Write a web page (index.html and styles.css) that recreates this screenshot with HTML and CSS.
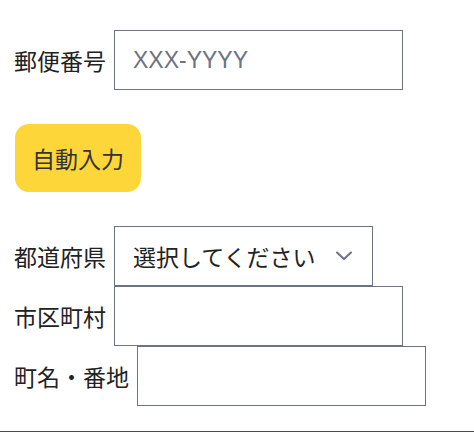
FILE: index.html
```html
<!DOCTYPE html>
<html lang="ja">
<head>
<meta charset="utf-8">
<title>住所入力</title>
<link rel="stylesheet" href="styles.css">
</head>
<body>
<main class="form">
  <div class="row">
    <label class="label" for="zip">郵便番号</label>
    <input class="field" id="zip" type="text" placeholder="XXX-YYYY">
  </div>
  <button class="autofill" type="button">自動入力</button>
  <div class="address">
    <div class="row">
      <label class="label" for="pref">都道府県</label>
      <span class="select-wrap">
        <select class="select" id="pref">
          <option>選択してください</option>
        </select>
        <svg class="chevron" width="18" height="10" viewBox="0 0 18 10" aria-hidden="true">
          <path d="M2 1.5 L9 8 L16 1.5" fill="none" stroke="#6b7280" stroke-width="2" stroke-linecap="round" stroke-linejoin="round"/>
        </svg>
      </span>
    </div>
    <div class="row">
      <label class="label" for="city">市区町村</label>
      <input class="field" id="city" type="text">
    </div>
    <div class="row">
      <label class="label" for="street">町名・番地</label>
      <input class="field" id="street" type="text">
    </div>
  </div>
  <div class="rule"></div>
</main>
</body>
</html>
```
FILE: styles.css
```css
html, body {
  margin: 0;
  padding: 0;
  background: #ffffff;
}
body {
  font-family: "Liberation Sans", "Noto Sans CJK JP", sans-serif;
  color: #222222;
  font-size: 23px;
}
.form {
  display: flex;
  flex-direction: column;
  align-items: flex-start;
  padding-top: 30px;
}
.row {
  display: flex;
  align-items: center;
  gap: 8px;
  padding-left: 14px;
}
.label {
  font-family: "Noto Sans CJK JP", sans-serif;
  font-size: 23px;
  line-height: 1;
  color: #222222;
}
.field,
.select {
  box-sizing: border-box;
  width: 289px;
  height: 60px;
  border: 1px solid #6b7280;
  border-radius: 0;
  background: #ffffff;
  padding: 0 18px;
  margin: 0;
  font-family: "Liberation Sans", "Noto Sans CJK JP", sans-serif;
  font-size: 23px;
  color: #222222;
  outline: none;
}
.field::placeholder {
  color: #6b7280;
  opacity: 1;
}
.select-wrap {
  position: relative;
  display: block;
}
.select {
  width: 259px;
  appearance: none;
  -webkit-appearance: none;
  font-family: "Noto Sans CJK JP", sans-serif;
}
.chevron {
  position: absolute;
  right: 20px;
  top: 25px;
  pointer-events: none;
}
.autofill {
  box-sizing: border-box;
  margin: 34px 0 0 15px;
  width: 126px;
  height: 68px;
  border: none;
  border-radius: 14px;
  background: #fdd63a;
  color: #333333;
  font-family: "Noto Sans CJK JP", sans-serif;
  font-size: 23px;
  padding: 0;
}
.address {
  margin-top: 34px;
  display: flex;
  flex-direction: column;
  align-items: flex-start;
}
.rule {
  align-self: stretch;
  margin-top: 25px;
  height: 1px;
  background: #4a4a4a;
}
```
